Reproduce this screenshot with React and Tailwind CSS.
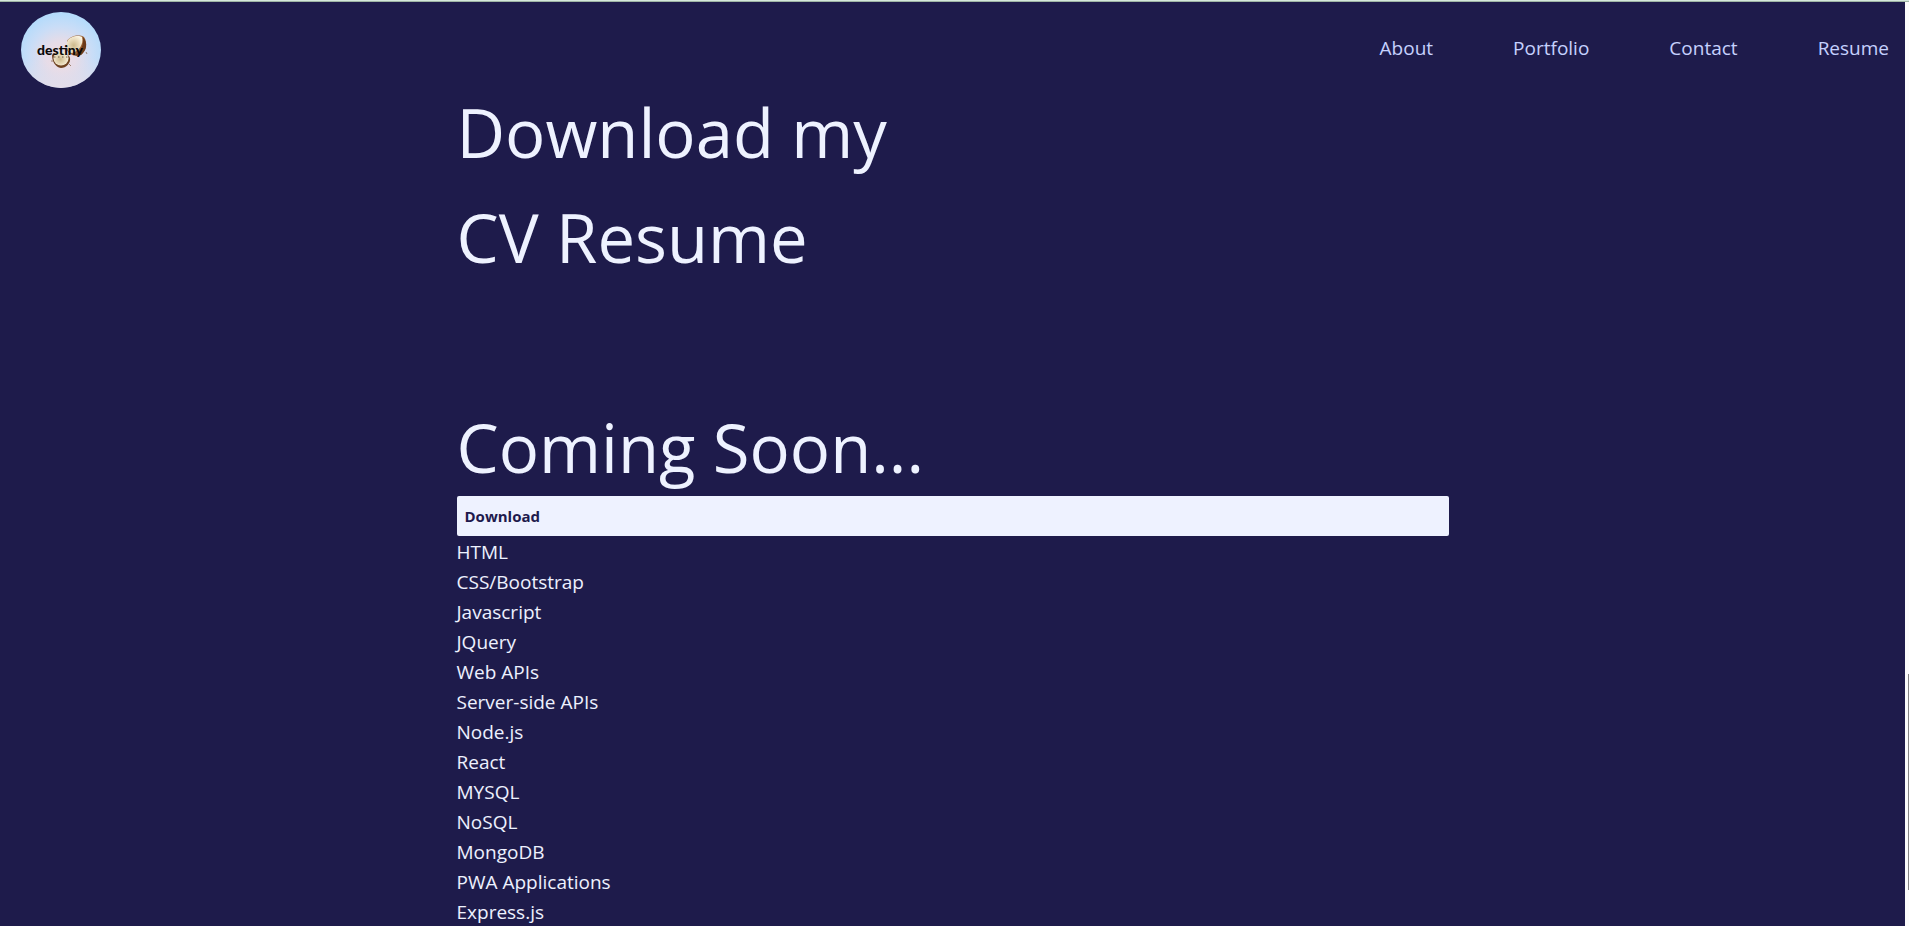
const navItems = ["About", "Portfolio", "Contact", "Resume"];

const skills = [
  "HTML",
  "CSS/Bootstrap",
  "Javascript",
  "JQuery",
  "Web APIs",
  "Server-side APIs",
  "Node.js",
  "React",
  "MYSQL",
  "NoSQL",
  "MongoDB",
  "PWA Applications",
  "Express.js",
];

function Logo() {
  return (
    <svg viewBox="0 0 80 76" className="h-[76px] w-20" role="img" aria-label="destiny">
      <defs>
        <radialGradient id="disc" cx="0.5" cy="0.58" r="0.56">
          <stop offset="0" stopColor="#f0dce2" />
          <stop offset="0.35" stopColor="#e6dce8" />
          <stop offset="0.7" stopColor="#c9ddf7" />
          <stop offset="1" stopColor="#b4dbfb" />
        </radialGradient>
        <linearGradient id="glow" x1="0" y1="0" x2="0" y2="1">
          <stop offset="0.6" stopColor="#eadde6" stopOpacity="0" />
          <stop offset="1" stopColor="#eadde6" stopOpacity="0.85" />
        </linearGradient>
        <radialGradient id="flesh" cx="0.45" cy="0.55" r="0.6">
          <stop offset="0" stopColor="#cdb98c" />
          <stop offset="0.6" stopColor="#eadcbc" />
          <stop offset="1" stopColor="#faf3e2" />
        </radialGradient>
      </defs>
      <ellipse cx="40" cy="38" rx="40" ry="38" fill="url(#disc)" />
      <ellipse cx="40" cy="38" rx="40" ry="38" fill="url(#glow)" />
      <path d="M46 29 C49 24 58 22 63 25 C67 31 65 39 60 43 C55 45 48 43 46 38 Z" fill="#9a6234" />
      <path d="M62 25 C67 31 66 38 60 43 C57 44 55 44 54 43 C60 39 63 33 62 25 Z" fill="#6b3a1a" />
      <path d="M46 30 C48 24 58 23 61 25 C63 32 58 39 51 41 C46 40 45 34 46 30 Z" fill="url(#flesh)" />
      <path d="M31 43 C32 40 48 40 49 46 C50 51 45 56 40 56 C34 55 31 49 31 43 Z" fill="#6f4220" />
      <ellipse cx="40" cy="46.5" rx="7.5" ry="7" fill="url(#flesh)" />
      <path d="M30 49 L32 49 M65 40 L66 42 M48 52 L50 54" stroke="#8a6a50" strokeWidth="0.8" />
      <text
        x="39"
        y="42.5"
        textAnchor="middle"
        className="font-['Lato',sans-serif] text-[14px] font-black"
        fill="#0b0908"
      >
        destiny
      </text>
      <path d="M33 45 H48" stroke="#3a2a20" strokeOpacity="0.7" strokeWidth="1" strokeDasharray="1.5 2.5" />
    </svg>
  );
}

export default function App() {
  return (
    <div className="flex h-screen flex-col overflow-hidden bg-[#1e1b4b] font-['Open_Sans',sans-serif] text-indigo-50">
      <div className="h-0.5 shrink-0 border-b border-[#9fb5a5] bg-[#d5e8dc]" />
      <div className="flex min-h-0 flex-1">
        <div className="min-w-0 flex-1 overflow-hidden">
          <header className="flex h-[78px] items-start justify-between pt-[10px] pr-4 pl-[21px]">
            <a href="#home" className="shrink-0">
              <Logo />
            </a>
            <nav className="flex h-[73px] items-center gap-20 text-[19px] text-indigo-200">
              {navItems.map((item) => (
                <a key={item} href={`#${item.toLowerCase()}`}>
                  {item}
                </a>
              ))}
            </nav>
          </header>
          <main className="mx-auto max-w-[992px]">
            <h1 className="-mb-1 text-[67px] leading-[105px]">
              Download my
              <br />
              CV Resume
              <br />
              <br />
              Coming Soon...
            </h1>
            <button
              type="button"
              className="block h-10 w-full rounded-xs bg-indigo-50 px-2 text-left text-[15px] font-bold text-indigo-950"
            >
              Download
            </button>
            <ul className="pt-px text-[19px] leading-[30px]">
              {skills.map((skill) => (
                <li key={skill}>{skill}</li>
              ))}
            </ul>
          </main>
        </div>
        <div className="flex w-1 flex-col items-end bg-[#fcfcfc]">
          <div className="h-[672px]" />
          <div className="h-[216px] w-px bg-[#858585]" />
        </div>
      </div>
    </div>
  );
}
